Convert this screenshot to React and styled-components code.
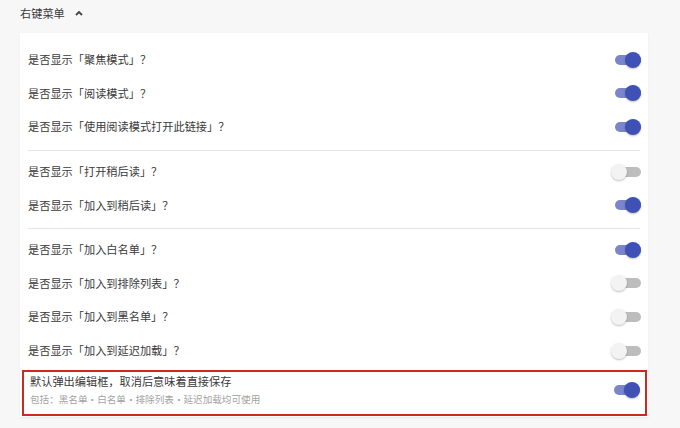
import React, { useState } from "react";
import styled, { createGlobalStyle } from "styled-components";

/* ─── Global page setup ─── */

const GlobalStyle = createGlobalStyle`
  html, body {
    margin: 0;
    padding: 0;
    background: #f7f7f7;
  }
  body {
    font-family: "Noto Sans CJK SC", "Noto Sans", sans-serif;
    color: #333333;
  }
`;

/* ─── Layout ─── */

const Page = styled.div`
  width: 680px;
  height: 428px;
  box-sizing: border-box;
  padding: 0 32px 0 20px;
  display: flex;
  flex-direction: column;
`;

const SectionHeader = styled.div`
  height: 33px;
  display: flex;
  align-items: center;
  gap: 10px;
  padding-bottom: 8px;
  box-sizing: border-box;
  font-size: 11.2px;
  color: #3a3a3a;
`;

const Card = styled.div`
  background: #ffffff;
  box-shadow: 0 1px 2px rgba(0, 0, 0, 0.06);
  padding: 10px 0 1px;
  display: flex;
  flex-direction: column;
`;

const Group = styled.div`
  display: flex;
  flex-direction: column;
`;

const Divider = styled.div`
  height: 1px;
  background: #e6e6e6;
  margin: 6px 8px 4px;
`;

const Row = styled.div`
  display: flex;
  align-items: center;
  justify-content: space-between;
  min-height: 33.6px;
  padding: 0 7px 0 8px;
  box-sizing: border-box;
  ${({ highlighted }) =>
    highlighted &&
    `
    margin: 3px 1px 0 2px;
    padding: 1px 5px 7px 6px;
    min-height: 46px;
    border: 2px solid #cc2a20;
  `}
`;

const Label = styled.div`
  display: flex;
  flex-direction: column;
  gap: 4px;
`;

const Title = styled.div`
  font-size: 11.2px;
  line-height: 15px;
  color: #3a3a3a;
`;

const Hint = styled.div`
  font-size: 9.6px;
  line-height: 13px;
  color: #a3a3a3;
`;

/* ─── Switch ─── */

const SwitchBox = styled.button`
  position: relative;
  width: 30px;
  height: 16px;
  padding: 0;
  border: none;
  background: transparent;
  cursor: pointer;
  flex-shrink: 0;
`;

const Track = styled.span`
  position: absolute;
  left: 4px;
  right: 0;
  top: 3px;
  height: 10px;
  border-radius: 5px;
  background: ${({ on }) => (on ? "#7986cb" : "#bdbdbd")};
`;

const Thumb = styled.span`
  position: absolute;
  top: 0;
  left: ${({ on }) => (on ? "14px" : "0")};
  width: 16px;
  height: 16px;
  border-radius: 50%;
  background: ${({ on }) => (on ? "#3f51b5" : "#f3f3f3")};
  box-shadow: 0 1px 2px rgba(0, 0, 0, 0.25);
`;

const Switch = ({ on, onToggle }) => (
  <SwitchBox onClick={onToggle}>
    <Track on={on ? 1 : 0} />
    <Thumb on={on ? 1 : 0} />
  </SwitchBox>
);

/* ─── Data ─── */

const groups = [
  [
    { id: "focus", text: "是否显示「聚焦模式」？", on: true },
    { id: "read", text: "是否显示「阅读模式」？", on: true },
    { id: "readLink", text: "是否显示「使用阅读模式打开此链接」？", on: true },
  ],
  [
    { id: "openLater", text: "是否显示「打开稍后读」？", on: false },
    { id: "addLater", text: "是否显示「加入到稍后读」？", on: true },
  ],
  [
    { id: "white", text: "是否显示「加入白名单」？", on: true },
    { id: "exclude", text: "是否显示「加入到排除列表」？", on: false },
    { id: "black", text: "是否显示「加入到黑名单」？", on: false },
    { id: "lazy", text: "是否显示「加入到延迟加载」？", on: false },
  ],
];

export default function App() {
  const initial = {};
  groups.flat().forEach((r) => (initial[r.id] = r.on));
  initial.editor = true;
  const [state, setState] = useState(initial);
  const toggle = (id) => setState((s) => ({ ...s, [id]: !s[id] }));

  return (
    <>
      <GlobalStyle />
      <Page>
        <SectionHeader>
          右键菜单
          <svg width="8" height="6" viewBox="0 0 8 6">
            <path
              d="M1 5 L4 2 L7 5"
              fill="none"
              stroke="#444"
              strokeWidth="1.8"
            />
          </svg>
        </SectionHeader>

        <Card>
          {groups.map((group, gi) => (
            <React.Fragment key={gi}>
              {gi > 0 && <Divider />}
              <Group>
                {group.map((row) => (
                  <Row key={row.id}>
                    <Title>{row.text}</Title>
                    <Switch on={state[row.id]} onToggle={() => toggle(row.id)} />
                  </Row>
                ))}
              </Group>
            </React.Fragment>
          ))}

          <Row highlighted>
            <Label>
              <Title>默认弹出编辑框，取消后意味着直接保存</Title>
              <Hint>包括：黑名单·白名单·排除列表·延迟加载均可使用</Hint>
            </Label>
            <Switch on={state.editor} onToggle={() => toggle("editor")} />
          </Row>
        </Card>
      </Page>
    </>
  );
}
